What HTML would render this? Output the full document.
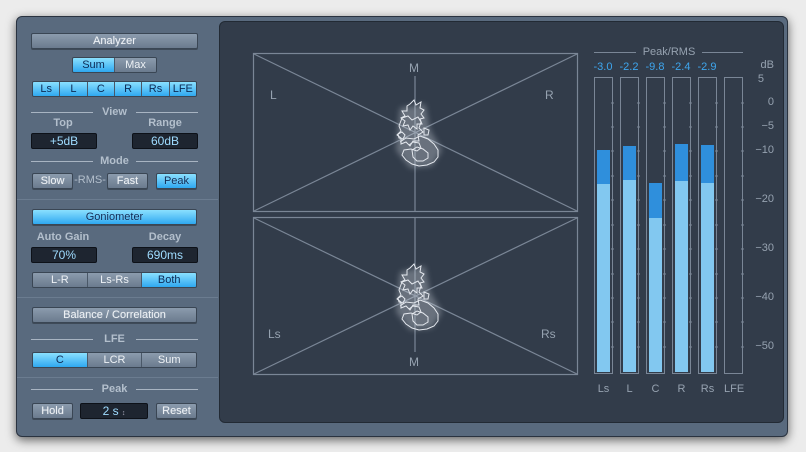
<!DOCTYPE html>
<html><head><meta charset="utf-8"><style>
*{box-sizing:border-box;margin:0;padding:0}
body{width:806px;height:452px;background:#ececec;position:relative;overflow:hidden;font-family:"Liberation Sans",sans-serif}
.frame{position:absolute;left:16px;top:16px;width:772px;height:421px;background:#596a7e;border-radius:6px;border:1px solid #2a3340;box-shadow:0 3px 10px rgba(0,0,0,.6)}
.disp{position:absolute;left:219px;top:21px;width:565px;height:402px;background:#323c4a;border-radius:6px;border:1px solid #222a34}
.a{position:absolute}
.btn{position:absolute;height:16px;border:1px solid #3a4654;border-radius:2px;background:linear-gradient(#8b9bad,#6b7b8e);color:#eef2f6;font-size:11px;text-align:center;line-height:14px;box-shadow:0 1px 0 rgba(0,0,0,.3);text-shadow:0 0 1px rgba(255,255,255,.4)}
.on{background:linear-gradient(#8ae0ff,#2fa8f0);color:#0c2a55}
.seg{position:absolute;height:16px;display:flex;border:1px solid #3a4654;border-radius:2px;overflow:hidden}
.seg div{flex:1;background:linear-gradient(#8b9bad,#6b7b8e);color:#eef2f6;font-size:11px;text-align:center;line-height:14px;border-right:1px solid #4a5868}
.seg div:last-child{border-right:none}
.seg .on{background:linear-gradient(#8ae0ff,#2fa8f0);color:#0c2a55}
.fld{position:absolute;height:16px;background:#1e2530;border:1px solid #0d1118;border-radius:2px;color:#9fdcff;font-size:12px;text-align:center;line-height:14px}
.lbl{position:absolute;color:#b3bfcc;font-size:11px;text-align:center;font-weight:bold}
.hdr{position:absolute;left:31px;width:167px;height:12px;font-size:11px;color:#b3bfcc;text-align:center;line-height:12px;font-weight:bold}
.hdr:before,.hdr:after{content:"";position:absolute;top:6px;height:1px;background:#a8b4c2;width:62px}
.hdr:before{left:0}.hdr:after{right:0}
.sep{position:absolute;left:17px;width:201px;height:1px;background:#3c4858;border-bottom:1px solid #6b7c90}
.box{position:absolute;top:77px;width:19px;height:297px;border:1px solid #7a8696}
.pk{position:absolute;left:2px;width:13px;background:#2f8fdc}
.rm{position:absolute;left:2px;width:13px;bottom:1px;background:#82c8f0}
.db{position:absolute;left:744px;width:30px;color:#96a2b0;font-size:11px;text-align:right}
.ch{position:absolute;top:383px;width:19px;text-align:center;color:#96a2b0;font-size:11px}
.pv{position:absolute;top:61px;width:26px;text-align:center;color:#3ea6ee;font-size:11px}
.gl{position:absolute;color:#96a2b0;font-size:12px}
</style></head><body>
<div class="frame"></div>
<div class="disp"></div>

<div class="btn" style="left:31px;top:33px;width:167px">Analyzer</div>
<div class="seg" style="left:72px;top:57px;width:85px"><div class="on">Sum</div><div>Max</div></div>
<div class="seg" style="left:32px;top:81px;width:165px"><div class="on">Ls</div><div class="on">L</div><div class="on">C</div><div class="on">R</div><div class="on">Rs</div><div class="on">LFE</div></div>
<div class="hdr" style="top:106px">View</div>
<div class="lbl" style="left:40px;top:117px;width:46px">Top</div>
<div class="lbl" style="left:140px;top:117px;width:50px">Range</div>
<div class="fld" style="left:31px;top:133px;width:66px">+5dB</div>
<div class="fld" style="left:132px;top:133px;width:66px">60dB</div>
<div class="hdr" style="top:155px">Mode</div>
<div class="btn" style="left:32px;top:173px;width:41px">Slow</div>
<div class="lbl" style="left:73px;top:174px;width:34px;font-weight:normal">-RMS-</div>
<div class="btn" style="left:107px;top:173px;width:41px">Fast</div>
<div class="btn on" style="left:156px;top:173px;width:41px">Peak</div>
<div class="sep" style="top:199px"></div>

<div class="btn on" style="left:32px;top:209px;width:165px">Goniometer</div>
<div class="lbl" style="left:31px;top:231px;width:64px">Auto Gain</div>
<div class="lbl" style="left:140px;top:231px;width:50px">Decay</div>
<div class="fld" style="left:31px;top:247px;width:66px">70%</div>
<div class="fld" style="left:132px;top:247px;width:66px">690ms</div>
<div class="seg" style="left:32px;top:272px;width:165px"><div>L-R</div><div>Ls-Rs</div><div class="on">Both</div></div>
<div class="sep" style="top:297px"></div>

<div class="btn" style="left:32px;top:307px;width:165px">Balance / Correlation</div>
<div class="hdr" style="top:333px">LFE</div>
<div class="seg" style="left:32px;top:352px;width:165px"><div class="on">C</div><div>LCR</div><div>Sum</div></div>
<div class="sep" style="top:377px"></div>
<div class="hdr" style="top:383px">Peak</div>
<div class="btn" style="left:32px;top:403px;width:41px">Hold</div>
<div class="fld" style="left:80px;top:403px;width:68px">2 s <span style="font-size:7px;color:#aab">&#8597;</span></div>
<div class="btn" style="left:156px;top:403px;width:41px">Reset</div>

<svg class="a" style="left:0;top:0" width="806" height="452">
<defs><filter id="bl"><feGaussianBlur stdDeviation="3"/></filter></defs>
<g stroke="#7a8696" stroke-width="1.2" fill="none">
<rect x="253.5" y="53.5" width="324" height="158"/>
<rect x="253.5" y="217.5" width="324" height="157"/>
<line x1="254" y1="54" x2="577" y2="211"/><line x1="577" y1="54" x2="254" y2="211"/>
<line x1="415" y1="76" x2="415" y2="211"/>
<line x1="254" y1="218" x2="577" y2="374"/><line x1="577" y1="218" x2="254" y2="374"/>
<line x1="415" y1="218" x2="415" y2="352"/>
</g>
<g fill="#cfd5dd" opacity=".35" filter="url(#bl)">
<path d="M400 108 L425 104 L430 130 L442 150 L432 166 L410 168 L396 150 L398 128z"/>
<path d="M400 272 L425 266 L430 292 L442 312 L432 328 L410 330 L396 312 L398 290z"/>
</g>
<g fill="none" stroke="#e4e8ee" stroke-width="1" id="sc">
<path d="M410 104 l4 -4 l2 5 l5 -3 l-1 6 l4 2 l-3 4 l3 4 l-4 1 l2 5 l-5 0 l0 5 l-4 -3 l-3 4 l-2 -5 l-5 1 l2 -5 l-4 -3 l4 -2 l-3 -5 l5 0 l0 -5z"/>
<path d="M402 118 l6 -2 l4 4 l6 -3 l3 5 l-2 6 l4 4 l-5 3 l1 6 l-6 0 l-3 5 l-4 -4 l-5 2 l0 -6 l-4 -3 l4 -4 l-2 -5z"/>
<path d="M400 142 l6 -4 l8 1 l6 -3 l8 3 l6 5 l4 6 l0 7 l-4 5 l-7 3 l-8 1 l-7 -2 l-6 -4 l-4 -5 l2 -5 l7 -1 l6 2 l4 -3 l-2 -5 l-6 -1 l-4 3"/>
<path d="M412 150 l5 -3 l6 2 l5 4 l0 5 l-5 3 l-6 0 l-4 -4z M398 134 l4 -2 l3 3 l-2 4 l-4 -1z M424 128 l5 2 l-1 5 l-4 0z"/>
</g>
<use href="#sc" transform="translate(0,164)"/>
<g stroke="#7a8696"><line x1="594" y1="52.5" x2="636" y2="52.5"/><line x1="702" y1="52.5" x2="743" y2="52.5"/></g>
<g stroke="#7a8696">
<path d="M611 103h3M611 127h3M611 151h3M611 176h3M611 200h3M611 225h3M611 249h3M611 274h3M611 298h3M611 322h3M611 347h3"/>
<path d="M637 103h3M637 127h3M637 151h3M637 176h3M637 200h3M637 225h3M637 249h3M637 274h3M637 298h3M637 322h3M637 347h3"/>
<path d="M663 103h3M663 127h3M663 151h3M663 176h3M663 200h3M663 225h3M663 249h3M663 274h3M663 298h3M663 322h3M663 347h3"/>
<path d="M689 103h3M689 127h3M689 151h3M689 176h3M689 200h3M689 225h3M689 249h3M689 274h3M689 298h3M689 322h3M689 347h3"/>
<path d="M715 103h3M715 127h3M715 151h3M715 176h3M715 200h3M715 225h3M715 249h3M715 274h3M715 298h3M715 322h3M715 347h3"/>
<path d="M741 103h3M741 127h3M741 151h3M741 176h3M741 200h3M741 225h3M741 249h3M741 274h3M741 298h3M741 322h3M741 347h3"/>
</g>
</svg>
<div class="gl" style="left:409px;top:61px">M</div>
<div class="gl" style="left:270px;top:88px">L</div>
<div class="gl" style="left:545px;top:88px">R</div>
<div class="gl" style="left:268px;top:327px">Ls</div>
<div class="gl" style="left:541px;top:327px">Rs</div>
<div class="gl" style="left:409px;top:355px">M</div>

<div class="a" style="left:636px;top:46px;width:66px;text-align:center;color:#96a2b0;font-size:11px">Peak/RMS</div>
<div class="pv" style="left:590px">-3.0</div>
<div class="pv" style="left:616px">-2.2</div>
<div class="pv" style="left:642px">-9.8</div>
<div class="pv" style="left:668px">-2.4</div>
<div class="pv" style="left:694px">-2.9</div>

<div class="box" style="left:594px"><div class="pk" style="top:72px;bottom:1px"></div><div class="rm" style="top:106px"></div></div>
<div class="box" style="left:620px"><div class="pk" style="top:68px;bottom:1px"></div><div class="rm" style="top:102px"></div></div>
<div class="box" style="left:646px"><div class="pk" style="top:105px;bottom:1px"></div><div class="rm" style="top:140px"></div></div>
<div class="box" style="left:672px"><div class="pk" style="top:66px;bottom:1px"></div><div class="rm" style="top:103px"></div></div>
<div class="box" style="left:698px"><div class="pk" style="top:67px;bottom:1px"></div><div class="rm" style="top:105px"></div></div>
<div class="box" style="left:724px"></div>

<div class="db" style="top:59px">dB</div>
<div class="db" style="top:73px;left:736px;width:28px">5</div>
<div class="db" style="top:96px">0</div>
<div class="db" style="top:120px">−5</div>
<div class="db" style="top:144px">−10</div>
<div class="db" style="top:193px">−20</div>
<div class="db" style="top:242px">−30</div>
<div class="db" style="top:291px">−40</div>
<div class="db" style="top:340px">−50</div>

<div class="ch" style="left:594px">Ls</div>
<div class="ch" style="left:620px">L</div>
<div class="ch" style="left:646px">C</div>
<div class="ch" style="left:672px">R</div>
<div class="ch" style="left:698px">Rs</div>
<div class="ch" style="left:724px">LFE</div>
</body></html>
